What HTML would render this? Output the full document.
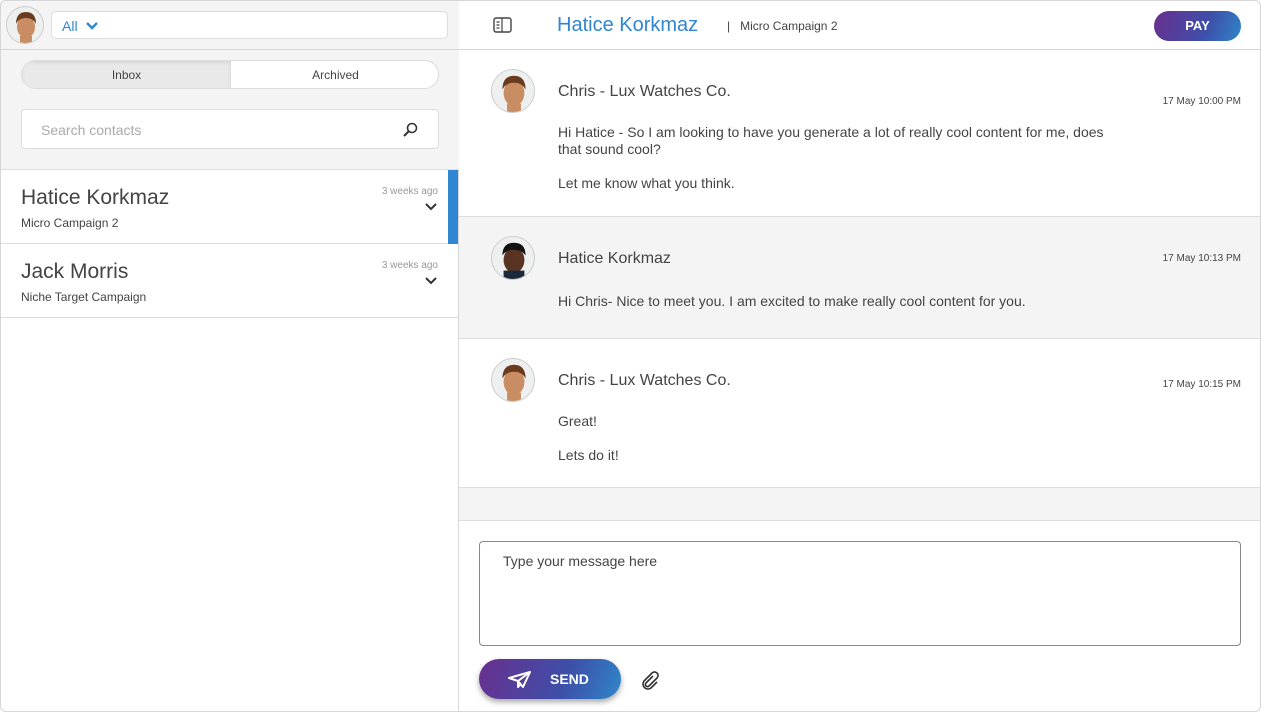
<!DOCTYPE html>
<html><head><style>
*{box-sizing:border-box;margin:0;padding:0}
body{width:1261px;height:712px;overflow:hidden;background:#fff;font-family:"Liberation Sans",sans-serif;color:#444;position:relative}
.frame{position:absolute;left:0;top:0;width:1261px;height:712px;overflow:hidden}
.border{position:absolute;left:0;top:0;width:1261px;height:712px;border:1px solid #d6d6d6;border-radius:6px;z-index:10}
.left{position:absolute;left:0;top:0;width:459px;height:712px;border-right:1px solid #d6d6d6}
.ltop{position:absolute;left:0;top:0;width:459px;height:170px;background:#f4f4f4;border-bottom:1px solid #ddd}
.hdrline{position:absolute;left:0;top:49px;width:1261px;height:1px;background:#d6d6d6}
.av{position:absolute;border-radius:50%;border:1px solid #ccc;background:#eef0f0;overflow:hidden}
.sel{position:absolute;left:51px;top:11px;width:397px;height:28px;background:#fff;border:1px solid #ddd;border-radius:5px;color:#2f86d2;font-size:14px;padding:6px 10px}
.tabs{position:absolute;left:21px;top:60px;width:418px;height:29px;border:1px solid #ddd;border-radius:15px;overflow:hidden;background:#fff;font-size:12px}
.tabs div{position:absolute;top:0;height:29px;line-height:28px;text-align:center;width:209px}
.search{position:absolute;left:21px;top:109px;width:418px;height:40px;background:#fff;border:1px solid #ddd;border-radius:4px;font-size:14px;color:#aaa;padding:12px 19px}
.item{position:absolute;left:0;width:458px;height:74px;border-bottom:1px solid #ddd;background:#fff}
.item .n{position:absolute;left:21px;top:16px;font-size:21px;color:#444}
.item .s{position:absolute;left:21px;top:46px;font-size:12px;color:#444}
.item .t{position:absolute;right:20px;top:16px;font-size:10px;color:#999}
.msg{position:absolute;left:459px;width:801px;border-bottom:1px solid #ddd}
.msg .nm{position:absolute;left:99px;font-size:16px;color:#444}
.msg .tm{position:absolute;right:19px;font-size:10px;color:#444}
.msg p{position:absolute;left:99px;font-size:14px;line-height:17px;width:650px;color:#444}
</style></head><body><div class="frame">
<div class="left">
<div class="ltop"></div>
<div class="sel">All <svg width="14" height="10" viewBox="0 0 14 10" style="margin-left:4px"><path d="M2 2l5 5 5-5" stroke="#2f86d2" stroke-width="2.4" fill="none"/></svg></div>
<div class="tabs"><div style="left:0;background:#e9e9e9;box-shadow:inset 0 1px 3px #ccc">Inbox</div><div style="left:209px">Archived</div></div>
<div class="search">Search contacts<svg style="position:absolute;right:20px;top:12px" width="16" height="16" viewBox="0 0 16 16"><circle cx="10" cy="6" r="4.5" stroke="#333" stroke-width="1.6" fill="none"/><path d="M7 9l-5 5" stroke="#333" stroke-width="2"/></svg></div>
<div class="item" style="top:170px"><div class="n">Hatice Korkmaz</div><div class="s" style="top:46px">Micro Campaign 2</div><div class="t">3 weeks ago</div><svg style="position:absolute;right:20px;top:32px" width="14" height="9"><path d="M2 2l5 5 5-5" stroke="#333" stroke-width="2" fill="none"/></svg><div style="position:absolute;right:0;top:0;width:10px;height:74px;background:#2f86d2"></div></div>
<div class="item" style="top:244px"><div class="n">Jack Morris</div><div class="s">Niche Target Campaign</div><div class="t">3 weeks ago</div><svg style="position:absolute;right:20px;top:32px" width="14" height="9"><path d="M2 2l5 5 5-5" stroke="#333" stroke-width="2" fill="none"/></svg></div>
</div>
<div class="hdrline"></div>
<div class="av" style="left:6px;top:6px;width:38px;height:38px"><svg width="38" height="38" viewBox="0 0 38 38"><ellipse cx="19" cy="20" rx="9" ry="11" fill="#c98d63"/><path d="M9 17q0-12 10-12t10 12q-3-6-10-6t-10 6z" fill="#6b3b1e"/><rect x="13" y="29" width="12" height="9" fill="#c98d63"/></svg></div>
<svg style="position:absolute;left:493px;top:17px" width="19" height="16" viewBox="0 0 19 16"><rect x="1" y="1" width="17" height="14" rx="2" fill="none" stroke="#444" stroke-width="1.4"/><path d="M9 1v14M3.5 5h3M3.5 8h3M3.5 11h3" stroke="#444" stroke-width="1.2"/></svg>
<div style="position:absolute;left:557px;top:14px;font-size:20px;color:#2f86d2">Hatice Korkmaz</div>
<div style="position:absolute;left:727px;top:19px;font-size:12px;color:#444">|&nbsp;&nbsp; Micro Campaign 2</div>
<div style="position:absolute;left:1154px;top:11px;width:87px;height:30px;border-radius:15px;background:linear-gradient(110deg,#6a2f8f,#3d4fa8 60%,#2f86c9);color:#fff;font-size:13px;font-weight:bold;text-align:center;line-height:30px">PAY</div>

<div class="msg" style="top:50px;height:167px;background:#fff"><div class="av" style="left:32px;top:19px;width:44px;height:44px"><svg width="44" height="44" viewBox="0 0 38 38"><ellipse cx="19" cy="20" rx="9" ry="11" fill="#c98d63"/><path d="M9 17q0-12 10-12t10 12q-3-6-10-6t-10 6z" fill="#6b3b1e"/><rect x="13" y="29" width="12" height="9" fill="#c98d63"/></svg></div><div class="nm" style="top:33px">Chris - Lux Watches Co.</div><div class="tm" style="top:46px">17 May 10:00 PM</div><p style="top:74px;width:600px">Hi Hatice - So I am looking to have you generate a lot of really cool content for me, does<br>that sound cool?</p><p style="top:125px">Let me know what you think.</p></div>
<div class="msg" style="top:217px;height:122px;background:#f4f4f4"><div class="av" style="left:32px;top:19px;width:44px;height:44px"><svg width="44" height="44" viewBox="0 0 38 38"><ellipse cx="19" cy="20" rx="9" ry="11" fill="#5a3422"/><path d="M9 16q0-11 10-11t10 11q-3-5-10-5t-10 5z" fill="#111"/><rect x="10" y="29" width="18" height="9" fill="#1a2a3a"/></svg></div><div class="nm" style="top:33px">Hatice Korkmaz</div><div class="tm" style="top:36px">17 May 10:13 PM</div><p style="top:76px">Hi Chris- Nice to meet you. I am excited to make really cool content for you.</p></div>
<div class="msg" style="top:339px;height:149px;background:#fff"><div class="av" style="left:32px;top:19px;width:44px;height:44px"><svg width="44" height="44" viewBox="0 0 38 38"><ellipse cx="19" cy="20" rx="9" ry="11" fill="#c98d63"/><path d="M9 17q0-12 10-12t10 12q-3-6-10-6t-10 6z" fill="#6b3b1e"/><rect x="13" y="29" width="12" height="9" fill="#c98d63"/></svg></div><div class="nm" style="top:33px">Chris - Lux Watches Co.</div><div class="tm" style="top:40px">17 May 10:15 PM</div><p style="top:74px">Great!</p><p style="top:108px">Lets do it!</p></div>
<div style="position:absolute;left:459px;top:488px;width:801px;height:33px;background:#f4f4f4;border-bottom:1px solid #ddd"></div>
<div style="position:absolute;left:479px;top:541px;width:762px;height:105px;border:1px solid #888;border-radius:4px;font-size:14px;color:#444;padding:11px 23px">Type your message here</div>
<div style="position:absolute;left:479px;top:659px;width:142px;height:40px;border-radius:20px;background:linear-gradient(110deg,#6a2f8f,#3d4fa8 60%,#2f86c9);box-shadow:0 3px 6px rgba(0,0,0,.35);color:#fff;font-size:14px;font-weight:bold"><svg style="position:absolute;left:28px;top:11px" width="25" height="19" viewBox="0 0 25 19"><path d="M2 8L23 2 16 17 11 11zM11 11L23 2M11 11v6l3-3" stroke="#fff" stroke-width="2" fill="none" stroke-linejoin="round"/></svg><span style="position:absolute;left:71px;top:12px">SEND</span></div>
<svg style="position:absolute;left:640px;top:671px" width="20" height="20" viewBox="0 0 20 20"><path d="M13 5l-7 7a2 2 0 0 0 3 3l8-8a3.5 3.5 0 0 0-5-5l-8 8a5 5 0 0 0 7 7l6-6" stroke="#333" stroke-width="1.6" fill="none"/></svg>
</div><div class="border"></div></body></html>
